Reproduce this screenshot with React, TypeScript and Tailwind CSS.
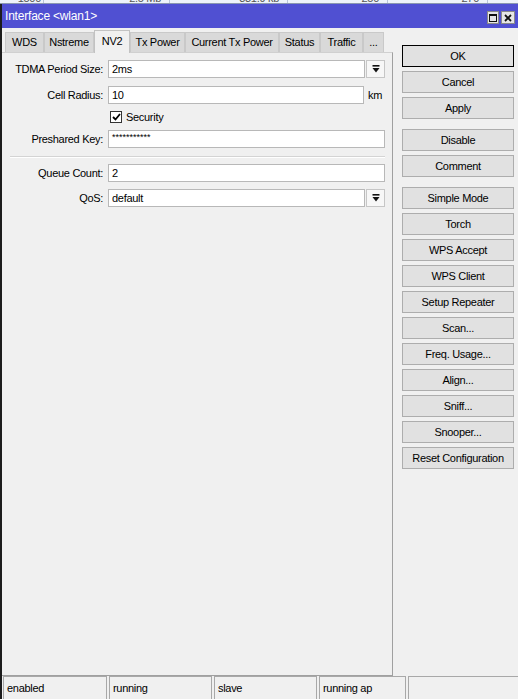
import React from "react";

const Dropdown = () => (
  <div className="w-[19px] h-[18px] ml-[1px] border border-[#c6c6c6] bg-[#f7f7f7] flex items-center justify-center">
    <svg width="8" height="8" viewBox="0 0 8 8">
      <rect x="0.5" y="0" width="7" height="1.6" fill="#111" />
      <polygon points="0.5,3 7.5,3 4,7.5" fill="#111" />
    </svg>
  </div>
);

const Field = ({ w, value }: { w: number; value: string }) => (
  <div
    className="h-[18px] bg-white border border-[#b8b8b8] flex items-center pl-[3px] overflow-hidden whitespace-nowrap"
    style={{ width: w }}
  >
    {value}
  </div>
);

const Label = ({ text }: { text: string }) => (
  <div className="w-[101px] text-right pr-0 whitespace-nowrap">{text}</div>
);

const Btn = ({ label, def }: { label: string; def?: boolean }) => (
  <div
    className={
      "w-[112px] h-[22px] flex items-center justify-center bg-[#e1e1e1] border " +
      (def ? "border-black" : "border-[#adadad]")
    }
  >
    {label}
  </div>
);

const tabs: [string, number, boolean][] = [
  ["WDS", 39, false],
  ["Nstreme", 50, false],
  ["NV2", 36, true],
  ["Tx Power", 55, false],
  ["Current Tx Power", 94, false],
  ["Status", 41, false],
  ["Traffic", 43, false],
  ["...", 21, false],
];

export default function App() {
  return (
    <div className="w-[518px] h-[699px] overflow-hidden bg-[#f0f0f0] text-black text-[11px] tracking-[-0.3px] font-['Liberation_Sans',Arial,sans-serif] flex flex-col">
      {/* background table strip */}
      <div className="h-[4px] bg-[#eef3fa] border-b border-[#8a97b0] overflow-hidden flex text-[#555] text-[11px] leading-[12px]">
        <div className="w-[44px] -mt-[8px] text-right pr-[2px] border-r border-[#b8c4d8]">1500</div>
        <div className="w-[126px] -mt-[8px] text-right pr-[8px] border-r border-[#b8c4d8]">2.5 Mb</div>
        <div className="w-[118px] -mt-[8px] text-right pr-[8px] border-r border-[#b8c4d8]">331.9 kb</div>
        <div className="w-[100px] -mt-[8px] text-right pr-[8px] border-r border-[#b8c4d8]">250</div>
        <div className="w-[100px] -mt-[8px] text-right pr-[8px] border-r border-[#b8c4d8]">270</div>
      </div>

      <div className="flex-1 flex flex-col border-l-2 border-[#1c1c1c]">
        {/* title bar */}
        <div className="h-[24px] bg-[#5050d2] flex items-center justify-between pl-[3px] pr-[3px]">
          <span className="text-white text-[12px] tracking-[-0.2px]">Interface &lt;wlan1&gt;</span>
          <div className="flex items-center gap-[2px] mt-[3px]">
            <div className="w-[12px] h-[13px] bg-[#e6e6e6] border border-[#8a8a8a] flex items-center justify-center">
              <svg width="8" height="8" viewBox="0 0 8 8">
                <rect x="0.5" y="0.5" width="7" height="7" fill="none" stroke="#111" strokeWidth="1" />
                <rect x="0" y="0" width="8" height="2" fill="#111" />
              </svg>
            </div>
            <div className="w-[14px] h-[13px] bg-[#e6e6e6] border border-[#8a8a8a] flex items-center justify-center">
              <svg width="8" height="8" viewBox="0 0 8 8">
                <path d="M1 1 L7 7 M7 1 L1 7" stroke="#111" strokeWidth="1.8" />
              </svg>
            </div>
          </div>
        </div>

        {/* body */}
        <div className="h-[648px] flex">
          <div className="w-[391px] flex flex-col">
            {/* tabs */}
            <div className="h-[24px] flex items-end pl-[3px]">
              {tabs.map(([t, w, a]) => (
                <div
                  key={t}
                  style={{ width: w }}
                  className={
                    "flex items-center justify-center whitespace-nowrap border border-b-0 " +
                    (a
                      ? "h-[23px] bg-[#f0f0f0] border-[#c2c2c2] relative z-10 -mb-px pb-[1px]"
                      : "h-[20px] bg-[#d9d9d9] border-[#c9c9c9]")
                  }
                >
                  {t}
                </div>
              ))}
            </div>
            {/* panel */}
            <div className="flex-1 border-t border-r border-b border-t-[#d0d0d0] border-r-[#a0a0a0] border-b-[#a0a0a0] pt-[7px]">
              <div className="flex items-center h-[18px]">
                <Label text="TDMA Period Size:" />
                <div className="ml-[5px] flex">
                  <Field w={257} value="2ms" />
                  <Dropdown />
                </div>
              </div>
              <div className="flex items-center h-[18px] mt-[8px]">
                <Label text="Cell Radius:" />
                <div className="ml-[5px] flex items-center">
                  <Field w={256} value="10" />
                  <span className="ml-[4px]">km</span>
                </div>
              </div>
              <div className="flex items-center h-[18px] mt-[4px]">
                <div className="ml-[108px] flex items-center">
                  <div className="w-[12px] h-[12px] bg-white border border-[#333] flex items-center justify-center">
                    <svg width="9" height="8" viewBox="0 0 9 8">
                      <path d="M1 4 L3.5 6.5 L8 1" fill="none" stroke="#000" strokeWidth="1.8" />
                    </svg>
                  </div>
                  <span className="ml-[4px]">Security</span>
                </div>
              </div>
              <div className="flex items-center h-[18px] mt-[4px]">
                <Label text="Preshared Key:" />
                <div className="ml-[5px]">
                  <div className="h-[18px] w-[277px] bg-white border border-[#b8b8b8] pl-[3px] text-[9px] leading-[12px] tracking-[0px]">
                    ***********
                  </div>
                </div>
              </div>
              <div className="mt-[8px] ml-[8px] w-[375px] h-[2px] border-t border-[#d4d4d4] border-b border-b-white" />
              <div className="flex items-center h-[18px] mt-[6px]">
                <Label text="Queue Count:" />
                <div className="ml-[5px]">
                  <Field w={277} value="2" />
                </div>
              </div>
              <div className="flex items-center h-[18px] mt-[7px]">
                <Label text="QoS:" />
                <div className="ml-[5px] flex">
                  <Field w={257} value="default" />
                  <Dropdown />
                </div>
              </div>
            </div>
          </div>

          {/* buttons */}
          <div className="pl-[9px] pt-[17px] flex flex-col gap-[10px]">
            <div className="flex flex-col gap-[4px]">
              <Btn label="OK" def />
              <Btn label="Cancel" />
              <Btn label="Apply" />
            </div>
            <div className="flex flex-col gap-[4px]">
              <Btn label="Disable" />
              <Btn label="Comment" />
            </div>
            <div className="flex flex-col gap-[4px]">
              <Btn label="Simple Mode" />
              <Btn label="Torch" />
              <Btn label="WPS Accept" />
              <Btn label="WPS Client" />
              <Btn label="Setup Repeater" />
              <Btn label="Scan..." />
              <Btn label="Freq. Usage..." />
              <Btn label="Align..." />
              <Btn label="Sniff..." />
              <Btn label="Snooper..." />
              <Btn label="Reset Configuration" />
            </div>
          </div>
        </div>

        {/* status bar */}
        <div className="h-[23px] flex gap-[2px] pl-[1px]">
          {[
            ["enabled", 104],
            ["running", 103],
            ["slave", 103],
            ["running ap", 87],
          ].map(([t, w]) => (
            <div
              key={t as string}
              style={{ width: w as number }}
              className="h-full border-t border-l border-r border-[#a8a8a8] flex items-center pl-[3px]"
            >
              {t}
            </div>
          ))}
          <div className="flex-1 h-full border-t border-l border-[#a8a8a8]" />
        </div>
      </div>
    </div>
  );
}
